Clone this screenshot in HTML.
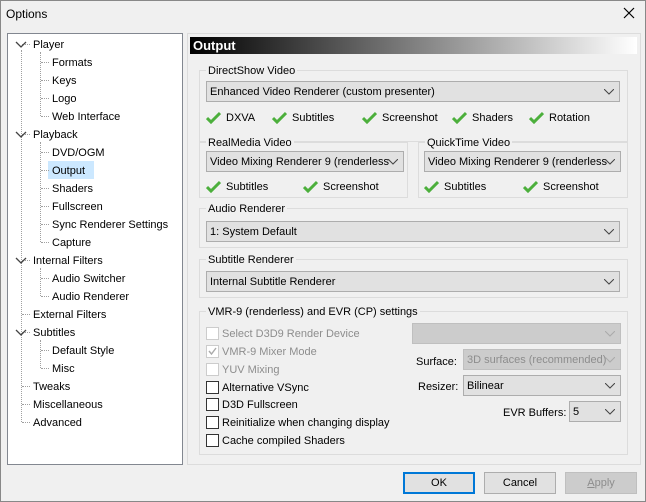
<!DOCTYPE html><html><head><style>
*{margin:0;padding:0;box-sizing:border-box}
body{width:646px;height:502px;background:#f0f0f0;font:11px "Liberation Sans",sans-serif;color:#000;position:relative;overflow:hidden}
.a{position:absolute;white-space:nowrap}
.t{line-height:16px;margin-top:1px}
.grp{position:absolute;border:1px solid #dcdcdc}
.lg{position:absolute;top:-8px;left:6px;background:#f0f0f0;padding:0 2px;line-height:16px}
.cb{position:absolute;background:#e1e1e1;border:1px solid #adadad;line-height:20px;padding-left:3px;padding-right:22px;overflow:hidden;white-space:nowrap}
.cb svg{position:absolute;right:5px;top:7px}
.ck{position:absolute;width:13px;height:13px;border:1px solid #333;background:#fff}
.dis{color:#8d8d8d}
.btn{position:absolute;width:72px;height:22px;background:#e1e1e1;border:1px solid #adadad;text-align:center;line-height:20px}
.dot{position:absolute;border-left:1px dotted #a0a0a0}
.doth{position:absolute;border-top:1px dotted #a0a0a0;width:8px}
</style></head><body>
<div class="a" style="left:0;top:0;width:646px;height:502px;border:1px solid #888"></div>
<div class="a t" style="left:6px;top:5px;font-size:12px">Options</div>
<svg class="a" style="left:623px;top:7px" width="12" height="12"><path d="M1 1L11 11M11 1L1 11" stroke="#000" stroke-width="1.2"/></svg>
<!-- tree -->
<div class="a" style="left:7px;top:33px;width:176px;height:432px;background:#fff;border:1px solid #828790"></div>
<div class="a" style="left:48px;top:161px;width:46px;height:18px;background:#cce8ff"></div>
<div class="dot" style="left:21px;top:50px;height:372px"></div>
<div class="dot" style="left:40px;top:52px;height:64px"></div>
<div class="dot" style="left:40px;top:142px;height:100px"></div>
<div class="dot" style="left:40px;top:268px;height:28px"></div>
<div class="dot" style="left:40px;top:340px;height:28px"></div>
<div id="tree"></div>
<script>
var items=[["Player",0,1],["Formats",1],["Keys",1],["Logo",1],["Web Interface",1],["Playback",0,1],["DVD/OGM",1],["Output",1],["Shaders",1],["Fullscreen",1],["Sync Renderer Settings",1],["Capture",1],["Internal Filters",0,1],["Audio Switcher",1],["Audio Renderer",1],["External Filters",0],["Subtitles",0,1],["Default Style",1],["Misc",1],["Tweaks",0],["Miscellaneous",0],["Advanced",0]];
var h="";items.forEach(function(it,i){var y=36+i*18;
if(it[1]){h+='<div class="doth" style="left:41px;top:'+(y+8)+'px"></div><div class="a t" style="left:52px;top:'+y+'px">'+it[0]+'</div>';}
else{h+='<div class="doth" style="left:22px;top:'+(y+8)+'px;width:8px"></div>';
if(it[2])h+='<svg class="a" style="left:15px;top:'+(y+5)+'px" width="12" height="8"><path d="M1 1L6 6L11 1" stroke="#444" fill="none" stroke-width="1.3"/></svg>';
h+='<div class="a t" style="left:33px;top:'+y+'px">'+it[0]+'</div>';}});
document.getElementById("tree").innerHTML=h;
</script>
<!-- right panel -->
<div class="a" style="left:187px;top:33px;width:454px;height:432px;border:1px solid #dcdcdc"></div>
<div class="a" style="left:190px;top:37px;width:447px;height:17px;background:linear-gradient(90deg,#000,#666 40%,#fff)"></div>
<div class="a" style="left:193px;top:37px;color:#fff;font-weight:bold;font-size:13px;line-height:18px">Output</div>

<div class="grp" style="left:199px;top:70px;width:429px;height:72px"><div class="lg">DirectShow Video</div></div>
<div class="cb" style="left:206px;top:81px;width:414px;height:21px">Enhanced Video Renderer (custom presenter)<svg width="10" height="6"><path d="M0 0L5 5L10 0" stroke="#444" fill="none"/></svg></div>

<div class="grp" style="left:199px;top:142px;width:209px;height:56px"><div class="lg">RealMedia Video</div></div>
<div class="cb" style="left:206px;top:151px;width:198px;height:21px">Video Mixing Renderer 9 (renderless<svg width="10" height="6"><path d="M0 0L5 5L10 0" stroke="#444" fill="none"/></svg></div>
<div class="grp" style="left:418px;top:142px;width:210px;height:56px"><div class="lg">QuickTime Video</div></div>
<div class="cb" style="left:424px;top:151px;width:197px;height:21px">Video Mixing Renderer 9 (renderless<svg width="10" height="6"><path d="M0 0L5 5L10 0" stroke="#444" fill="none"/></svg></div>

<div class="grp" style="left:199px;top:208px;width:429px;height:40px"><div class="lg">Audio Renderer</div></div>
<div class="cb" style="left:206px;top:221px;width:414px;height:21px">1: System Default<svg width="10" height="6"><path d="M0 0L5 5L10 0" stroke="#444" fill="none"/></svg></div>
<div class="grp" style="left:199px;top:259px;width:429px;height:39px"><div class="lg">Subtitle Renderer</div></div>
<div class="cb" style="left:206px;top:271px;width:414px;height:21px">Internal Subtitle Renderer<svg width="10" height="6"><path d="M0 0L5 5L10 0" stroke="#444" fill="none"/></svg></div>

<div class="grp" style="left:199px;top:311px;width:429px;height:144px"><div class="lg">VMR-9 (renderless) and EVR (CP) settings</div></div>
<div id="g"></div>
<script>
var c=[[206,117,"DXVA"],[272,117,"Subtitles"],[362,117,"Screenshot"],[452,117,"Shaders"],[529,117,"Rotation"],[206,186,"Subtitles"],[303,186,"Screenshot"],[424,186,"Subtitles"],[523,186,"Screenshot"]];
var s="";c.forEach(function(k){s+='<svg class="a" style="left:'+k[0]+'px;top:'+(k[1]-6)+'px" width="15" height="13"><path d="M1 7L5 11L14 2" stroke="#4caf3c" stroke-width="3" fill="none"/></svg><div class="a t" style="left:'+(k[0]+20)+'px;top:'+(k[1]-8)+'px">'+k[2]+'</div>';});
var b=[["Select D3D9 Render Device",1,0],["VMR-9 Mixer Mode",1,1],["YUV Mixing",1,0],["Alternative VSync"],["D3D Fullscreen"],["Reinitialize when changing display"],["Cache compiled Shaders"]];
var ys=[333,351,369,387,404,422,440];
b.forEach(function(k,i){var y=ys[i];s+='<div class="ck" style="left:206px;top:'+(y-6)+'px;'+(k[1]?'border-color:#ccc':'')+'"></div>';
if(k[2])s+='<svg class="a" style="left:207px;top:'+(y-5)+'px" width="11" height="11"><path d="M2 5L4.5 8L9 2" stroke="#aaa" stroke-width="1.4" fill="none"/></svg>';
s+='<div class="a t'+(k[1]?' dis':'')+'" style="left:222px;top:'+(y-8)+'px">'+k[0]+'</div>';});
document.getElementById("g").innerHTML=s;
</script>
<div class="cb" style="left:412px;top:323px;width:209px;height:21px;background:#ccc;border-color:#bfbfbf"><svg width="10" height="6"><path d="M0 0L5 5L10 0" stroke="#aaa" fill="none"/></svg></div>
<div class="a t" style="left:416px;top:353px">Surface:</div>
<div class="cb dis" style="left:463px;top:349px;width:158px;height:21px;background:#ccc;border-color:#bfbfbf">3D surfaces (recommended)<svg width="10" height="6"><path d="M0 0L5 5L10 0" stroke="#aaa" fill="none"/></svg></div>
<div class="a t" style="left:418px;top:378px">Resizer:</div>
<div class="cb" style="left:463px;top:375px;width:158px;height:21px">Bilinear<svg width="10" height="6"><path d="M0 0L5 5L10 0" stroke="#444" fill="none"/></svg></div>
<div class="a t" style="left:503px;top:404px">EVR Buffers:</div>
<div class="cb" style="left:569px;top:401px;width:52px;height:21px">5<svg width="10" height="6"><path d="M0 0L5 5L10 0" stroke="#444" fill="none"/></svg></div>

<div class="btn" style="left:403px;top:472px;border:2px solid #0078d7;line-height:18px">OK</div>
<div class="btn" style="left:484px;top:472px">Cancel</div>
<div class="btn dis" style="left:565px;top:472px;background:#ccc;border-color:#bfbfbf"><u>A</u>pply</div>
</body></html>
